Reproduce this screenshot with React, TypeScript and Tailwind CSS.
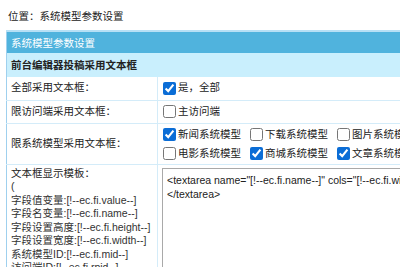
import React from "react";

const font = { fontFamily: '"Liberation Sans", "Noto Sans CJK SC", sans-serif' };

function Cb({ checked, label }: { checked?: boolean; label: string }) {
  return (
    <label className="flex items-center gap-[2px] whitespace-nowrap">
      <input type="checkbox" defaultChecked={checked} className="m-0 h-[13px] w-[13px] shrink-0 accent-[#0b6dd6]" />
      <span>{label}</span>
    </label>
  );
}

export default function App() {
  return (
    <div className="w-[400px] h-[267px] overflow-hidden bg-white text-[10.5px] text-[#222]" style={font}>
      <div className="h-[30px] pl-[8px] pt-[8px] leading-[16px]">位置：系统模型参数设置</div>
      <table className="ml-[6px] w-[600px] table-fixed border-collapse border border-[#9fd0ee]">
        <colgroup>
          <col className="w-[151px]" />
          <col />
        </colgroup>
        <tbody>
          <tr>
            <td colSpan={2} className="h-[22px] border-t-2 border-[#b7e0f5] bg-[#50b3dd] pl-[4px] text-white leading-[20px]">
              系统模型参数设置
            </td>
          </tr>
          <tr>
            <td colSpan={2} className="h-[24px] bg-[#c9effd] pl-[4px] font-bold leading-[24px]">
              前台编辑器投稿采用文本框
            </td>
          </tr>
          <tr className="border-b border-[#d4ecf9]">
            <td className="h-[23px] border-r border-[#d4ecf9] pl-[4px] whitespace-nowrap">全部采用文本框：</td>
            <td className="pl-[5px]">
              <Cb checked label="是，全部" />
            </td>
          </tr>
          <tr className="border-b border-[#d4ecf9]">
            <td className="h-[23px] border-r border-[#d4ecf9] pl-[4px] whitespace-nowrap">限访问端采用文本框：</td>
            <td className="pl-[5px]">
              <Cb label="主访问端" />
            </td>
          </tr>
          <tr className="border-b border-[#d4ecf9]">
            <td className="h-[41px] border-r border-[#d4ecf9] pl-[4px] whitespace-nowrap">限系统模型采用文本框：</td>
            <td className="pl-[5px] py-[2px]">
              <div className="grid grid-cols-[87px_87px_87px] gap-y-[5px] leading-[14px]">
                <Cb checked label="新闻系统模型" />
                <Cb label="下载系统模型" />
                <Cb label="图片系统模型" />
                <Cb label="电影系统模型" />
                <Cb checked label="商城系统模型" />
                <Cb checked label="文章系统模型" />
              </div>
            </td>
          </tr>
          <tr>
            <td className="border-r border-[#d4ecf9] pl-[4px] pt-[2px] align-top leading-[13.5px] text-[#333] whitespace-nowrap overflow-hidden">
              <div className="text-[#222]">文本框显示模板：</div>
              <div>(</div>
              <div>字段值变量:[!--ec.fi.value--]</div>
              <div>字段名变量:[!--ec.fi.name--]</div>
              <div>字段设置高度:[!--ec.fi.height--]</div>
              <div>字段设置宽度:[!--ec.fi.width--]</div>
              <div>系统模型ID:[!--ec.fi.mid--]</div>
              <div>访问端ID:[!--ec.fi.rpid--]</div>
              <div>)</div>
            </td>
            <td className="pl-[4px] pt-[3px] align-top">
              <div className="h-[120px] w-[420px] border border-[#a9a9a9] px-[4px] pt-[4px] leading-[14px] text-[#222] whitespace-nowrap">
                <div>&lt;textarea name="[!--ec.fi.name--]" cols="[!--ec.fi.width--]" rows="[!--ec.fi.height--]"&gt;</div>
                <div>&lt;/textarea&gt;</div>
              </div>
            </td>
          </tr>
        </tbody>
      </table>
    </div>
  );
}
